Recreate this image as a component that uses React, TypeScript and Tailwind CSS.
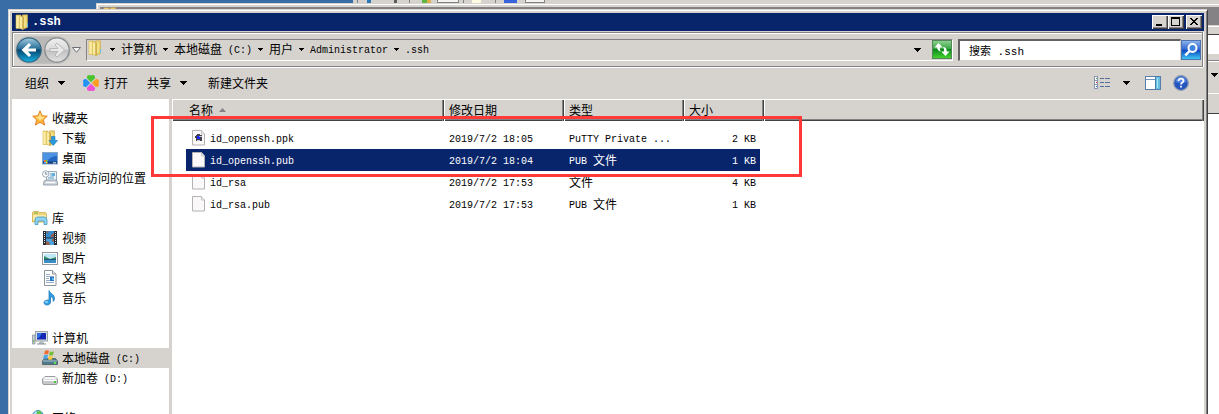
import type { ReactNode } from "react";

const CJK_OR_LATIN = /[\u3000-\u9fff]+|[^\u3000-\u9fff]+/g;

/** UI label: ideographs at 12px, Latin runs in a half-width monospace. */
function Label({ text }: { text: string }) {
  const runs = text.match(CJK_OR_LATIN) ?? [];
  return (
    <span className="block h-5 whitespace-pre text-xs leading-5">
      {runs.map((run, i) =>
        run.charCodeAt(0) >= 0x3000 ? (
          <span key={i}>{run}</span>
        ) : (
          <span key={i} className="align-[1px] font-['Liberation_Mono',monospace] text-[10px] leading-none">
            {run}
          </span>
        ),
      )}
    </span>
  );
}

function Icon({ children, className = "" }: { children: ReactNode; className?: string }) {
  return (
    <svg viewBox="0 0 16 16" className={`size-4 shrink-0 ${className}`} aria-hidden="true">
      {children}
    </svg>
  );
}

function Arrow({ small = false }: { small?: boolean }) {
  return small ? (
    <svg viewBox="0 0 5 3" className="h-[3px] w-[5px] shrink-0" shapeRendering="crispEdges" aria-hidden="true">
      <path d="M0 0h5v1H4v1H3v1H2V2H1V1H0z" />
    </svg>
  ) : (
    <svg viewBox="0 0 7 4" className="h-1 w-[7px] shrink-0" shapeRendering="crispEdges" aria-hidden="true">
      <path d="M0 0h7v1H6v1H5v1H4v1H3V3H2V2H1V1H0z" />
    </svg>
  );
}

function FolderShape() {
  return (
    <>
      <path d="M1 1h5v13.500H1z" fill="#f2da7c" stroke="#d3b24e" strokeWidth=".6" />
      <path d="M1.500 2h2v12h-2z" fill="#fbeeac" />
      <path d="M7.500.800h5v12.700l-5 2z" fill="#e9ce6b" stroke="#c9a948" strokeWidth=".6" />
      <path d="M4.500 1.500L8 3v12.700l-3.500-1.500z" fill="#f9eba0" stroke="#c9a947" strokeWidth=".5" />
      <path d="M8 3v12.500" stroke="#b8952f" strokeWidth=".9" />
      <path d="M9 2.500h2v10l-2 1z" fill="#f3df88" />
    </>
  );
}

function FolderIcon({ className }: { className?: string }) {
  return (
    <Icon className={className}>
      <FolderShape />
      <path d="M12 9h1v4h-1z" fill="#62c2e6" />
    </Icon>
  );
}

function StarIcon() {
  return (
    <Icon>
      <path d="M8 .8l2.100 4.900 5.200.5-3.900 3.600 1.200 5.300L8 12.300l-4.600 2.800 1.200-5.300L.7 6.200l5.200-.5z" fill="#ffb638" stroke="#dc7a22" strokeWidth=".9" />
      <path d="M8 2.800l1.300 3.700 4 .4-5.300 3.600-4.300-3.600 3-.4z" fill="#ffe08a" />
    </Icon>
  );
}

function DownloadsIcon() {
  return (
    <Icon>
      <FolderShape />
      <path d="M9.500 6.500h3.500v4h2.500l-4.200 5L7 10.500h2.500z" fill="#2a9be0" stroke="#1972b5" strokeWidth=".6" />
    </Icon>
  );
}

function DesktopIcon() {
  return (
    <Icon>
      <rect x=".5" y="2.500" width="15" height="11.500" fill="#2369c4" stroke="#86a6c8" />
      <path d="M1 3h14v3Q9 6 5 11H1z" fill="#4d93e4" />
      <path d="M1 11.500h14v2H1z" fill="#163f78" />
      <path d="M11 12h3v1.500h-3z" fill="#a9bdd2" />
      <path d="M2 10h2v2H2z" fill="#ef7130" />
      <path d="M4 10h1.500v2H4z" fill="#78c93e" />
      <path d="M2 12h2v1.500H2z" fill="#55b7fa" />
      <path d="M4 12h1.500v1.500H4z" fill="#ffd83d" />
    </Icon>
  );
}

function RecentIcon() {
  return (
    <Icon>
      <path d="M4.500 1.500h10v10h-10z" fill="#eef5fa" stroke="#9aaab8" />
      <path d="M8 4h4M8 6h4M6 8h6" stroke="#5b9cc8" />
      <path d="M10 3h3v3h-3z" fill="#62b0de" />
      <path d="M2 11l2-1h10l1.500 2v3H1.500z" fill="#d1d7dc" stroke="#82909c" strokeWidth=".8" />
      <path d="M4 12.500h9" stroke="#fff" />
      <circle cx="3.700" cy="4" r="3.200" fill="#f8fafb" stroke="#8e9ca9" strokeWidth=".8" />
      <path d="M3.700 2v2.200h1.600" fill="none" stroke="#456077" strokeWidth=".7" />
    </Icon>
  );
}

function LibraryIcon() {
  return (
    <Icon>
      <path d="M.5 2.500l1-1h5l1 1h6l1 1V12H.5z" fill="#ecd47c" stroke="#d1b04c" strokeWidth=".8" />
      <path d="M2 3h4" stroke="#6aac42" />
      <path d="M1 5h13v5H1z" fill="#f9ebaa" />
      <path d="M3 14.500V10Q3 7 6 7h6q3 0 3 3v4.500h-3V11H6v3.500z" fill="#8ed3f1" stroke="#4699c4" strokeWidth=".8" />
    </Icon>
  );
}

function VideoIcon() {
  return (
    <Icon>
      <path d="M1 1h14v14H1z" fill="#262b31" />
      <path d="M4 1h8v6.500H4z" fill="#388bcc" />
      <path d="M4 8.500h8V15H4z" fill="#4aa3df" />
      <path d="M5 1h2l-1 2-1 1zM9 5l3-2v4H9zM4 11l3 1 1 3H4zM10 9h2v3l-2-1z" fill="#965f4c" />
      <path d="M2.500 2v12M13.500 2v12" stroke="#e4e8eb" strokeWidth="1" strokeDasharray="1 1" />
    </Icon>
  );
}

function PictureIcon() {
  return (
    <Icon>
      <rect x=".5" y="2.500" width="15" height="12" fill="#fff" stroke="#929a9f" />
      <path d="M2 4h12v9H2z" fill="#bfe9f7" />
      <path d="M2 6l4 2 2 1 6-2v3H2z" fill="#368a6a" />
      <path d="M2 9h12v4H2z" fill="#3b8dc5" />
      <path d="M2 9h12v1H2z" fill="#1d5877" />
    </Icon>
  );
}

function DocumentIcon() {
  return (
    <Icon>
      <path d="M2.500.5h8l3.500 3.500v11.500H2.500z" fill="#fff" stroke="#8f9498" />
      <path d="M10.500.5V4H14" fill="#dfe4e8" stroke="#8f9498" />
      <path d="M4 4.500h4M4 6.500h8M4 8.500h3M4 10.500h4M4 12.500h8" stroke="#8aa3c4" strokeWidth=".9" />
      <path d="M8 7h4v4H8z" fill="#2475c7" />
      <path d="M10 8h2v2h-2z" fill="#62bce8" />
    </Icon>
  );
}

function MusicIcon() {
  return (
    <Icon>
      <path d="M7 .5c1 3 6 4 5.500 8.500-.2 1.300-.7 2-1.300 2.500.5-3-1-4.500-2.700-5V12c0 2-1.500 3-3.500 3S2 14 2 12.500 4 9.700 7 10z" fill="#2f9de2" stroke="#1974b8" strokeWidth=".7" />
      <ellipse cx="4.500" cy="12" rx="1.600" ry="1" fill="#8ed5f8" />
    </Icon>
  );
}

function ComputerIcon() {
  return (
    <Icon>
      <path d="M.5 5h2.500v9H.5z" fill="#c7ced4" stroke="#808a92" strokeWidth=".7" />
      <path d="M1.200 10h1v2h-1z" fill="#62bd4b" />
      <rect x="3.500" y="1.500" width="12" height="9.500" fill="#d9dddf" stroke="#9ba4aa" />
      <path d="M5 3h9v6.500H5z" fill="#1325b4" />
      <path d="M5 3h5L7 8H5z" fill="#316fe2" />
      <path d="M8 11h3l1.500 3h-6z" fill="#b5bcc2" />
      <path d="M5 13.500h9v1H5z" fill="#858e95" />
    </Icon>
  );
}

function SystemDriveIcon() {
  return (
    <Icon>
      <path d="M.5 11l2-2.500h11l2 2.500v3.500H.5z" fill="#4f7888" stroke="#435a65" strokeWidth=".8" />
      <path d="M1 11h14" stroke="#a6c4cf" />
      <path d="M12 12h2v2h-2z" fill="#5fe34c" />
      <path d="M3 .8q2-1 4 0L6 4.500q-2-1-4 0z" fill="#f26a30" />
      <path d="M8 1.300q2 1 4 0L11 5q-2 1-4 0z" fill="#74bb38" />
      <path d="M2 5.200q2-1 4 0L5 9Q3 8 1 9z" fill="#4aa5e4" />
      <path d="M7 5.700q2 1 4 0L10 9.200q-2 1-4 0z" fill="#f9c936" />
    </Icon>
  );
}

function DriveIcon() {
  return (
    <Icon>
      <path d="M.5 9l2.500-2.500h10L15.500 9v4l-1 1.500h-13l-1-1.500z" fill="#c7c9ca" stroke="#85898b" strokeWidth=".8" />
      <path d="M1.500 8.500L3 7h10l1.500 1.500v1h-13z" fill="#f6f6f6" />
      <path d="M1.500 10.500h13" stroke="#fff" />
      <path d="M12 11h2v2h-2z" fill="#49c63a" />
    </Icon>
  );
}

function NetworkIcon() {
  return (
    <Icon>
      <circle cx="6" cy="5.800" r="5.300" fill="#37a5d8" stroke="#2a79b0" strokeWidth=".7" />
      <path d="M5 1l3-.2 2 2-2 2-2 2-2-2z" fill="#63c64e" />
      <path d="M1.500 4l2-2.500h1.500L4 5z" fill="#c5ecfa" />
      <path d="M7 8h8v6H7z" fill="#244fbe" stroke="#b9c3cb" />
    </Icon>
  );
}

function FileIcon({ putty = false }: { putty?: boolean }) {
  return (
    <Icon>
      <path d="M.5.500h9l3 3.500v11H.5z" fill="#fbf8f9" stroke="#b4b2b2" />
      <path d="M9.500.5V4h3" fill="#efefef" stroke="#c4c2c2" />
      {putty && (
        <g shapeRendering="crispEdges">
          <path d="M5 4h3v1h2v6H4V8H3V6h1V5h1z" fill="#42424c" />
          <path d="M5 6h3v3H5z" fill="#1626ff" />
          <path d="M8 6h2v1H8zM5 10h3v1H5z" fill="#c9c9d6" />
          <path d="M7 6h1v1H7z" fill="#8f96ff" />
        </g>
      )}
    </Icon>
  );
}

function OpenIcon() {
  return (
    <Icon>
      <path d="M8 7.200L4 3.200Q3.500 0 6.500 0q1 0 1.500.6Q8.500 0 9.500 0q3 0 2.500 3.200z" fill="#4ac52f" />
      <path d="M8.800 8l4-4q3.200-.5 3.200 2.500 0 1-.6 1.500.6.5.6 1.500 0 3-3.200 2.500z" fill="#ff9e22" />
      <path d="M8 8.800l4 4q.5 3.200-2.500 3.200-1 0-1.500-.6-.5.6-1.500.6-3 0-2.500-3.200z" fill="#ef50d3" />
      <path d="M7.200 8l-4 4Q0 12.500 0 9.500 0 8.500.6 8 0 7.500 0 6.500 0 3.500 3.200 4z" fill="#2491f5" />
    </Icon>
  );
}

function ViewsIcon() {
  return (
    <svg viewBox="0 0 16 16" className="size-4 shrink-0" shapeRendering="crispEdges" aria-hidden="true">
      <path d="M.5 1.500h3v12h-3zM.5 5.500h3M.5 9.500h3" fill="#fff" stroke="#8796af" />
      <path d="M2 3h1v1H2z" fill="#3a9a7a" />
      <path d="M2 7h1v1H2z" fill="#e1271a" />
      <path d="M2 11h1v1H2z" fill="#3576ce" />
      <path d="M6 3.500h4m1 0h5M6 7.500h4m1 0h5M6 11.500h4m1 0h5" stroke="#54709b" />
    </svg>
  );
}

function PreviewPaneIcon() {
  return (
    <Icon>
      <rect x=".5" y="1.500" width="15" height="13" fill="#fff" stroke="#567dab" />
      <path d="M1 4.500h9" stroke="#7395bd" />
      <path d="M10 2h5v12h-5z" fill="#65bde0" />
      <path d="M10.500 2v12" stroke="#4880a9" />
      <path d="M12 3h1v10h-1z" fill="#a6e5f7" />
    </Icon>
  );
}

function HelpIcon() {
  return (
    <Icon>
      <circle cx="8" cy="8" r="7.300" fill="#2456bd" stroke="#8b98b3" strokeWidth="1.200" />
      <path d="M2.500 7a5.500 5.500 0 0 1 11 0Q8 9 2.500 7z" fill="#5283de" />
      <path d="M5.500 6Q5.500 3.700 8 3.700T10.500 6C10.500 7.500 8 7.500 8 9.500M8 10.800v1.700" fill="none" stroke="#fff" strokeWidth="1.700" />
    </Icon>
  );
}

function HistoryArt({ forward = false }: { forward?: boolean }) {
  return (
    <svg viewBox="0 0 26 26" className="size-[26px]" aria-hidden="true">
      <defs>
        <linearGradient id="back-fill" x2="0" y2="1">
          <stop offset="0" stopColor="#a4cde0" />
          <stop offset=".45" stopColor="#276f99" />
          <stop offset=".5" stopColor="#07456e" />
          <stop offset="1" stopColor="#16b1e5" />
        </linearGradient>
        <linearGradient id="forward-fill" x2="0" y2="1">
          <stop offset="0" stopColor="#f0f0f0" />
          <stop offset=".48" stopColor="#d9d9d9" />
          <stop offset=".5" stopColor="#bfbfbf" />
          <stop offset="1" stopColor="#e2e2e2" />
        </linearGradient>
      </defs>
      <circle cx="13" cy="13" r="12.200" fill={forward ? "url(#forward-fill)" : "url(#back-fill)"} stroke={forward ? "#85888c" : "#356681"} strokeWidth="1.200" />
      {forward ? (
        <path d="M6 11.500h8L11 8l2-2 7.500 7-7.500 7-2-2 3-3.500H6z" fill="#e9e9e9" stroke="#a7a7a7" strokeWidth=".7" />
      ) : (
        <path d="M20 11.500h-8L15 8l-2-2-7.500 7 7.500 7 2-2-3-3.500h8z" fill="#fff" />
      )}
    </svg>
  );
}

type NavEntry = { label: string; icon: ReactNode; selected?: boolean };
type NavGroup = NavEntry & { items: NavEntry[] };

const navigation: NavGroup[] = [
  {
    label: "收藏夹",
    icon: <StarIcon />,
    items: [
      { label: "下载", icon: <DownloadsIcon /> },
      { label: "桌面", icon: <DesktopIcon /> },
      { label: "最近访问的位置", icon: <RecentIcon /> },
    ],
  },
  {
    label: "库",
    icon: <LibraryIcon />,
    items: [
      { label: "视频", icon: <VideoIcon /> },
      { label: "图片", icon: <PictureIcon /> },
      { label: "文档", icon: <DocumentIcon /> },
      { label: "音乐", icon: <MusicIcon /> },
    ],
  },
  {
    label: "计算机",
    icon: <ComputerIcon />,
    items: [
      { label: "本地磁盘 (C:)", icon: <SystemDriveIcon />, selected: true },
      { label: "新加卷 (D:)", icon: <DriveIcon /> },
    ],
  },
  { label: "网络", icon: <NetworkIcon />, items: [] },
];

const files = [
  { name: "id_openssh.ppk", date: "2019/7/2 18:05", type: "PuTTY Private ...", size: "2 KB", putty: true },
  { name: "id_openssh.pub", date: "2019/7/2 18:04", type: "PUB 文件", size: "1 KB", selected: true },
  { name: "id_rsa", date: "2019/7/2 17:53", type: "文件", size: "4 KB" },
  { name: "id_rsa.pub", date: "2019/7/2 17:53", type: "PUB 文件", size: "1 KB" },
];

const crumbs = ["计算机", "本地磁盘 (C:)", "用户", "Administrator", ".ssh"];

function BackgroundWindows() {
  return (
    <div className="absolute inset-0" aria-hidden="true">
      <div className="absolute top-[3px] right-0 bottom-0 left-24 border-t border-l border-[#d6d3ce] bg-white">
        <div className="h-full border-t border-l border-white bg-[#d6d3ce] pt-0.5 pl-0.5">
          <div className="h-[18px] bg-[#848284] pl-[3px]">
            <FolderIcon />
          </div>
          <div className="mt-px h-2 border-t border-white" />
          <div className="h-[20px] border-t border-[#424142] bg-white" />
          <div className="h-[6px]" />
          <div className="flex h-[33px] items-center justify-end border-t border-[#848284] pr-px pb-1 shadow-[inset_0_1px_0_#fff]">
            <Arrow />
          </div>
          <div className="h-[21px] border-t border-b border-t-white border-b-[#424142]" />
          <div className="h-full bg-white" />
        </div>
      </div>
      <div className="absolute top-0 right-0 left-[353px] flex h-[3px] overflow-hidden bg-[#d6d3ce]">
        <div className="ml-1 w-px bg-[#848284]" />
        <div className="ml-[9px] h-[3px] w-1 bg-[#2e78b8]" />
        <div className="ml-[23px] h-[3px] w-[3px] bg-[#5c5c5c]" />
        <div className="ml-3 w-px bg-[#848284]" />
        <div className="ml-3 h-[3px] w-[5px] bg-[#5db742]" />
        <div className="h-[3px] w-1 bg-[#e0b04a]" />
        <div className="ml-1.5 w-[22px] border-x border-b border-[#848284] bg-[#f4f3f1]" />
        <div className="ml-1 w-px bg-[#848284]" />
        <div className="ml-2 w-[9px] bg-[#fffbe0]" />
        <div className="ml-[14px] w-px bg-[#848284]" />
        <div className="ml-2 w-[13px] bg-[#3763df]" />
        <div className="ml-2 w-[20px] border-x border-b border-[#848284] bg-[#f4f3f1]" />
      </div>
    </div>
  );
}

function CaptionButton({ label, children }: { label: string; children: ReactNode }) {
  return (
    <button
      type="button"
      aria-label={label}
      className="h-3.5 w-4 bg-[#d6d3ce] shadow-[inset_1px_1px_0_#fff,inset_-1px_-1px_0_#424142,inset_-2px_-2px_0_#848284]"
    >
      <svg viewBox="0 0 16 14" className="h-3.5 w-4" shapeRendering="crispEdges" aria-hidden="true">
        {children}
      </svg>
    </button>
  );
}

function TitleBar() {
  return (
    <header className="flex h-[18px] items-center bg-[#08246b] pr-0.5 pl-[3px]">
      <FolderIcon />
      <h1 className="ml-px flex-1 font-['Liberation_Mono',monospace] text-xs leading-4 font-bold text-white">.ssh</h1>
      <CaptionButton label="最小化">
        <path d="M4 9h6v2H4z" />
      </CaptionButton>
      <CaptionButton label="最大化">
        <path d="M3 2h9v9H3zM4 4v6h7V4z" fillRule="evenodd" />
      </CaptionButton>
      <span className="w-0.5" />
      <CaptionButton label="关闭">
        <path d="M4 3h2v1h1v1h2V4h1V3h2v1h-1v1h-1v1H9v1h1v1h1v1h1v1h-2V9H9V8H7v1H6v1H4V9h1V8h1V7h1V6H6V5H5V4H4z" />
      </CaptionButton>
    </header>
  );
}

function AddressBand() {
  return (
    <div className="mt-px mr-px flex h-[35px] items-center border border-[#848284] pr-px pl-[3px] shadow-[inset_1px_1px_0_#fff,0_1px_0_#fff,1px_0_0_#fff]">
      <div className="flex items-center rounded-full bg-[#b9b9b8] shadow-[0_0_0_1px_#c2c1be]">
        <button type="button" aria-label="后退" className="rounded-full">
          <HistoryArt />
        </button>
        <button type="button" aria-label="前进" className="ml-0.5 rounded-full">
          <HistoryArt forward />
        </button>
      </div>
      <button type="button" aria-label="最近的页面" className="ml-0.5 flex items-center">
        <svg viewBox="0 0 9 6" className="h-1.5 w-[9px]" aria-hidden="true">
          <path d="M.5.500h8l-4 4.800z" fill="#f7f7f7" stroke="#6f6f78" />
        </svg>
      </button>
      <nav
        aria-label="地址"
        className="ml-[5px] flex h-[22px] flex-1 items-center border border-t-[#848284] border-r-white border-b-white border-l-[#848284] pl-px"
      >
        <FolderIcon className="self-start" />
        {crumbs.map((crumb) => (
          <span key={crumb} className="flex h-5 items-start">
            <span className="flex h-full w-[17px] items-center justify-center">
              <Arrow small />
            </span>
            <a href="#" className="flex h-[18px] items-center">
              <Label text={crumb} />
            </a>
          </span>
        ))}
        <button type="button" aria-label="以前的位置" className="mr-[11px] ml-auto">
          <Arrow />
        </button>
        <button type="button" aria-label="刷新">
          <svg viewBox="0 0 20 19" className="h-[19px] w-5" aria-hidden="true">
            <defs>
              <linearGradient id="refresh-fill" x2="0" y2="1">
                <stop offset="0" stopColor="#8fd492" />
                <stop offset=".48" stopColor="#35a342" />
                <stop offset=".5" stopColor="#0b8b1d" />
                <stop offset="1" stopColor="#49d52f" />
              </linearGradient>
            </defs>
            <rect x=".5" y=".5" width="19" height="18" fill="url(#refresh-fill)" stroke="#56875a" />
            <path d="M6.500 3L2.500 7.500h2.700C5.200 10 6.500 11 9 11.500 7.800 10 7.800 9 8 7.500h2.700z" fill="#fff" />
            <path d="M13.500 16l4-4.500h-2.700C14.800 9 13.500 7 11 7c1.200 1.500 1.200 3 1 4.500H9.300z" fill="#fff" />
          </svg>
        </button>
      </nav>
      <div className="ml-[5px] flex h-[22px] items-center">
        <input
          type="text"
          aria-label="搜索 .ssh"
          defaultValue="搜索 .ssh"
          className="h-[22px] w-[223px] border-t-2 border-r border-b border-l-2 border-t-[#636163] border-r-[#d6d3ce] border-b-[#d6d3ce] border-l-[#636163] bg-white pl-[9px] font-['Liberation_Mono','Noto_Sans_CJK_SC',monospace] text-[11px] text-black outline-none"
        />
        <button type="button" aria-label="搜索">
          <svg viewBox="0 0 20 20" className="size-5" aria-hidden="true">
            <defs>
              <linearGradient id="search-fill" x2="0" y2="1">
                <stop offset="0" stopColor="#8fb6ec" />
                <stop offset=".48" stopColor="#2c62d2" />
                <stop offset=".5" stopColor="#0d43bd" />
                <stop offset="1" stopColor="#3fcdf7" />
              </linearGradient>
            </defs>
            <rect x=".5" y=".5" width="19" height="19" fill="url(#search-fill)" stroke="#4d73af" />
            <circle cx="11.500" cy="8" r="4" fill="#3e84df" stroke="#fff" strokeWidth="2" />
            <path d="M8.500 11l-4.200 4.300" stroke="#fff" strokeWidth="2.500" />
          </svg>
        </button>
      </div>
    </div>
  );
}

function ToolBar() {
  return (
    <div role="toolbar" className="mt-px flex h-[31px] items-center pr-[15px] pb-0.5 pl-[13px]">
      <button type="button" className="flex items-center gap-[9px]">
        <Label text="组织" />
        <Arrow />
      </button>
      <button type="button" className="ml-[18px] flex items-center gap-[5px]">
        <OpenIcon />
        <Label text="打开" />
      </button>
      <button type="button" className="ml-[19px] flex items-center gap-[9px]">
        <Label text="共享" />
        <Arrow />
      </button>
      <button type="button" className="ml-[21px] flex items-center">
        <Label text="新建文件夹" />
      </button>
      <button type="button" aria-label="更改视图" className="ml-auto flex items-center gap-[13px]">
        <ViewsIcon />
        <Arrow />
      </button>
      <button type="button" aria-label="预览窗格" className="ml-[15px]">
        <PreviewPaneIcon />
      </button>
      <button type="button" aria-label="帮助" className="ml-3">
        <HelpIcon />
      </button>
    </div>
  );
}

function NavRow({ entry, nested = false }: { entry: NavEntry; nested?: boolean }) {
  return (
    <a
      href="#"
      className={`flex h-5 items-center gap-1 ${nested ? "pl-[30px]" : "pl-5"} ${entry.selected ? "bg-[#d6d3ce]" : ""}`}
    >
      {entry.icon}
      <Label text={entry.label} />
    </a>
  );
}

function NavigationPane() {
  return (
    <nav aria-label="导航窗格" className="flex w-[157px] shrink-0 flex-col gap-5 overflow-hidden bg-white pt-[9px]">
      {navigation.map((group) => (
        <div key={group.label}>
          <NavRow entry={group} />
          {group.items.map((item) => (
            <NavRow key={item.label} entry={item} nested />
          ))}
        </div>
      ))}
    </nav>
  );
}

function HeaderCell({ label, first = false }: { label: string; first?: boolean }) {
  return (
    <th
      scope="col"
      className={`p-0 text-left font-normal shadow-[inset_0_1px_0_#fff,inset_-1px_0_0_#424142,inset_-2px_0_0_#848284,inset_1px_0_0_#fff,inset_0_-1px_0_#424142,inset_0_-2px_0_#848284] ${first ? "pl-[17px]" : "pl-[5px]"}`}
    >
      <span className="flex h-[22px] items-center gap-1.5">
        <Label text={label} />
        {first && (
          <svg viewBox="0 0 7 4" className="h-1 w-[7px]" aria-hidden="true">
            <path d="M0 4L3.500 0 7 4z" fill="#848284" />
          </svg>
        )}
      </span>
    </th>
  );
}

function FileList() {
  return (
    <main className="relative ml-[3px] min-w-0 flex-1 bg-white">
      <table className="w-full table-fixed border-collapse">
        <colgroup>
          <col className="w-[272px]" />
          <col className="w-[120px]" />
          <col className="w-[120px]" />
          <col className="w-20" />
          <col />
        </colgroup>
        <thead className="bg-[#d6d3ce]">
          <tr>
            <HeaderCell label="名称" first />
            <HeaderCell label="修改日期" />
            <HeaderCell label="类型" />
            <HeaderCell label="大小" />
            <HeaderCell label="" />
          </tr>
        </thead>
        <tbody className="before:block before:h-1.5 before:content-['']">
          {files.map((file) => {
            const fill = file.selected ? "bg-[#08246b] text-white" : "";
            return (
              <tr key={file.name}>
                <td className="p-0">
                  <div className={`ml-3.5 flex h-[22px] items-center gap-0.5 pl-1.5 ${fill}`}>
                    <FileIcon putty={file.putty} />
                    <Label text={file.name} />
                  </div>
                </td>
                <td className="p-0">
                  <div className={`flex h-[22px] items-center pl-[5px] ${fill}`}>
                    <Label text={file.date} />
                  </div>
                </td>
                <td className="p-0">
                  <div className={`flex h-[22px] items-center pl-[5px] ${fill}`}>
                    <Label text={file.type} />
                  </div>
                </td>
                <td className="p-0">
                  <div className={`mr-1 flex h-[22px] items-center justify-end pr-1 ${fill}`}>
                    <Label text={file.size} />
                  </div>
                </td>
                <td className="p-0" />
              </tr>
            );
          })}
        </tbody>
      </table>
      <div className="pointer-events-none absolute top-[17px] -left-[21px] h-[61px] w-[651px] border-3 border-[#ff3838]" />
    </main>
  );
}

export default function App() {
  return (
    <div className="relative flex h-screen overflow-hidden bg-[#396da5] pt-[9px] pr-[11px] pl-2 font-['Noto_Sans_CJK_SC',sans-serif] text-black">
      <BackgroundWindows />
      <div className="relative flex min-w-0 flex-1 flex-col border-t border-r border-l border-t-[#d6d3ce] border-r-[#424142] border-l-[#d6d3ce] bg-[#d6d3ce] pt-[3px] pr-[3px] pl-[3px] shadow-[inset_1px_1px_0_#fff,inset_-1px_0_0_#848284]">
        <TitleBar />
        <AddressBand />
        <ToolBar />
        <div className="flex min-h-0 flex-1">
          <NavigationPane />
          <FileList />
        </div>
      </div>
    </div>
  );
}
